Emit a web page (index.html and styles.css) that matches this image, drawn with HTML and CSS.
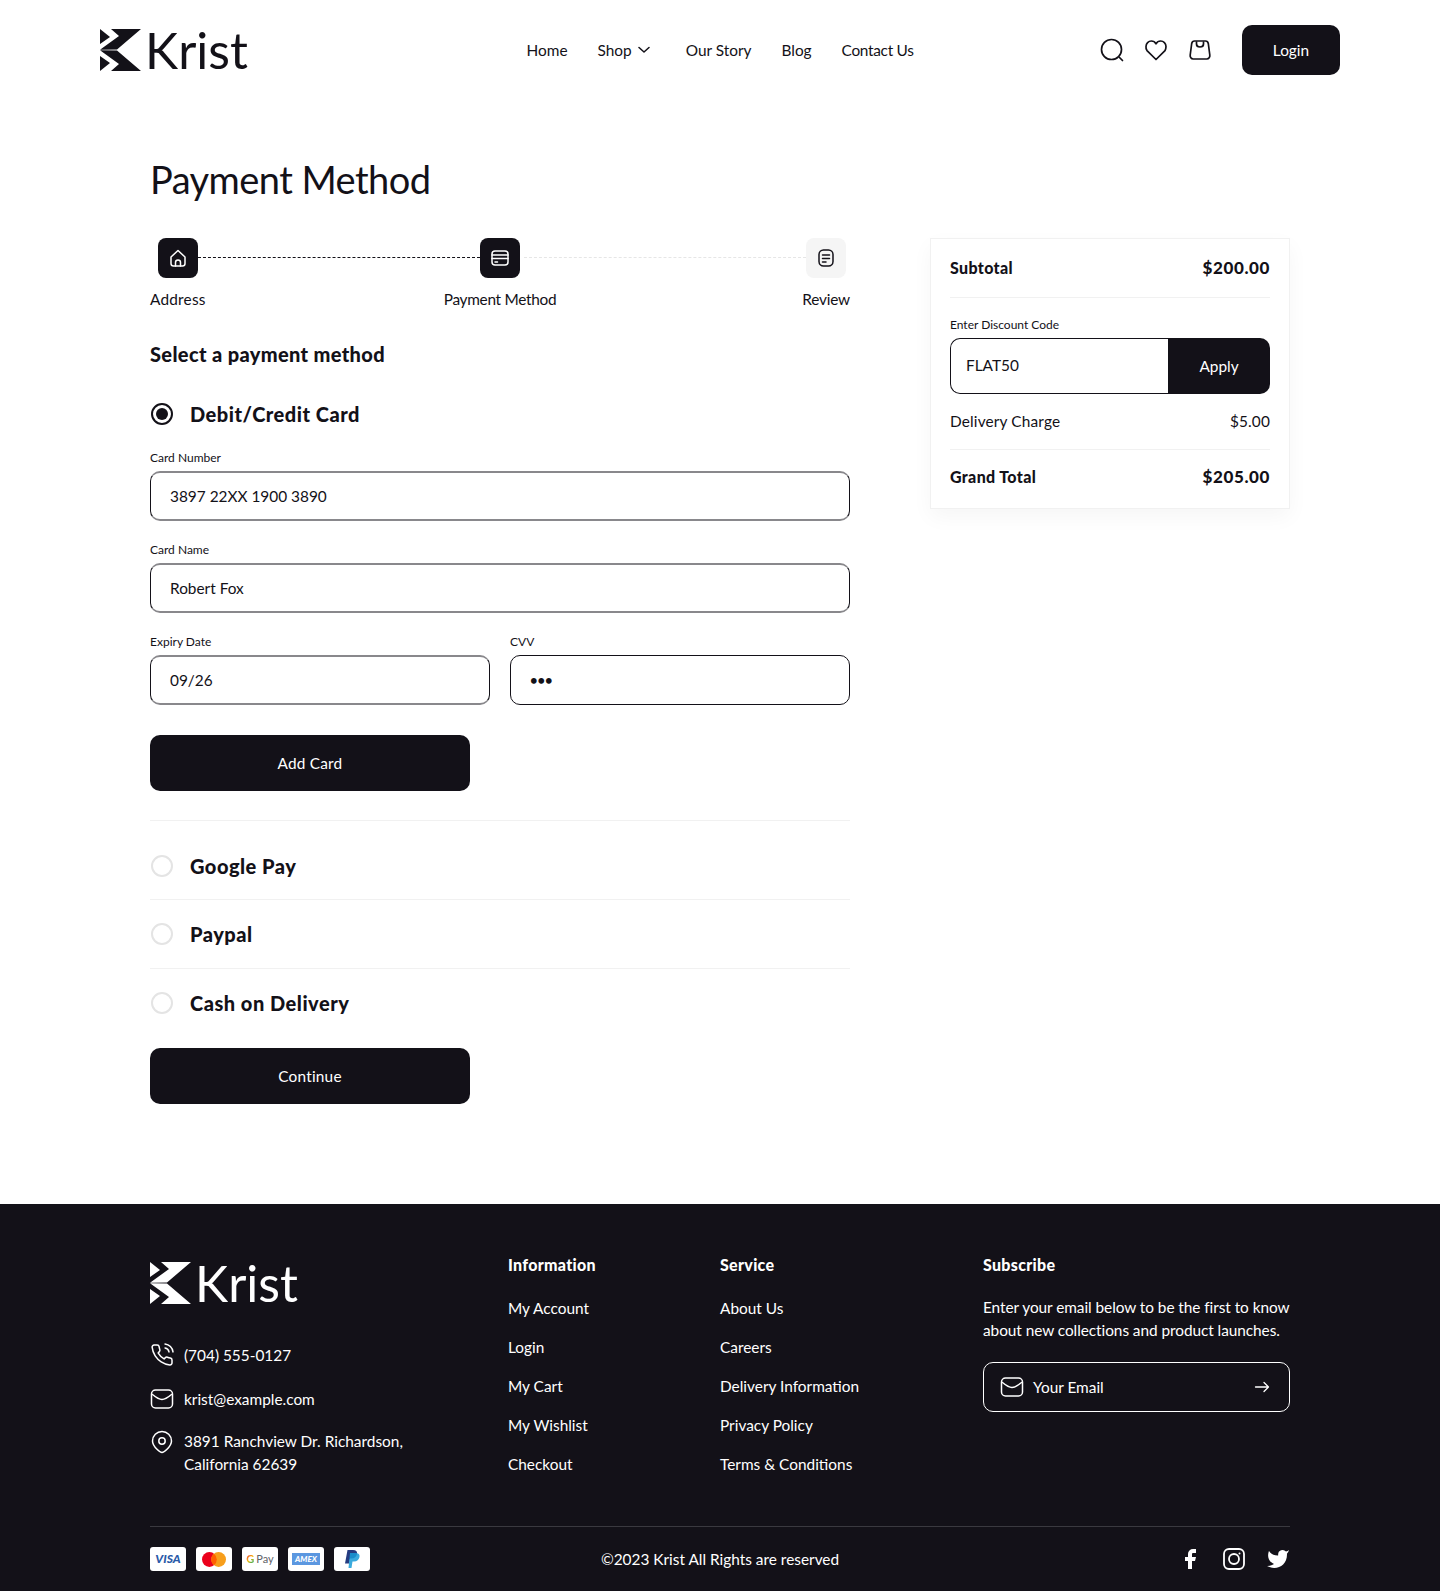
FILE: index.html
```html
<!DOCTYPE html>
<html lang="en">
<head>
<meta charset="utf-8">
<title>Krist - Payment Method</title>
<link rel="stylesheet" href="styles.css">
</head>
<body>
<header class="site-header">
  <a class="logo" href="#">
    <svg class="logo-mark" viewBox="0 0 41 42"><path d="M0 0 10 8 0 15zM0 27 10 34 0 42zM11 0H41L17 20.500 0 20.800 19 7zM0 21.200 17 21.500 41 42H11L19 35z"/></svg>
    <span class="logo-text">Krist</span>
  </a>
  <nav class="main-nav">
    <a>Home</a>
    <a class="has-caret">Shop <svg class="caret" viewBox="0 0 12 8"><path d="M1 1.500 6 6l5-4.500"/></svg></a>
    <a>Our Story</a>
    <a>Blog</a>
    <a class="nav-contact">Contact Us</a>
  </nav>
  <div class="header-actions">
    <svg class="ico" viewBox="0 0 24 24"><circle cx="11.500" cy="11.500" r="10"/><path d="m19.500 19.500 3 3"/></svg>
    <svg class="ico" viewBox="0 0 24 24"><path d="M12 21.500 3 12.600A6 6 0 0 1 2 8.500C2 5.300 4.500 3 7.300 3c2 0 3.700 1 4.700 2.800C13 4 14.700 3 16.700 3 19.500 3 22 5.300 22 8.500c0 1.500-.4 2.900-1 4.100z"/></svg>
    <svg class="ico" viewBox="0 0 24 24"><path d="M6.500 3h11c1.500 0 2.500 1 2.800 2.500l1.500 11.500c.3 2.200-1 4-3 4H5.200c-2 0-3.300-1.800-3-4L3.700 5.500C4 4 5 3 6.500 3z"/><path d="M8.500 4v2c0 1.800 1.500 3 3.500 3s3.500-1.200 3.500-3V4"/></svg>
    <button class="btn btn-login">Login</button>
  </div>
</header>

<main class="page">
  <h1 class="page-title">Payment Method</h1>
  <div class="columns">
    <section class="checkout">
      <div class="step-icons">
        <span class="step-box step-first step-on"><svg class="ico-sm" viewBox="0 0 20 20"><path d="M3 9 10 2.500 17 9v6.500c0 1.400-1 2.500-2.500 2.500h-9C4 18 3 16.900 3 15.500z"/><path d="M7.500 18v-3.500a2.500 2.500 0 0 1 5 0V18"/></svg></span>
        <span class="step-line step-line-done"></span>
        <span class="step-box step-on"><svg class="ico-sm" viewBox="0 0 20 20"><rect x="2" y="3" width="16" height="14" rx="3"/><path d="M2 7h16M2 10.500h16M5 14h2.500"/></svg></span>
        <span class="step-line step-line-next"></span>
        <span class="step-box step-last"><svg class="ico-sm" viewBox="0 0 20 20"><rect x="3" y="2" width="14" height="16" rx="4.500"/><path d="M6.500 7h7M6.500 10.500h7M6.500 14h3.500"/></svg></span>
      </div>
      <div class="step-labels">
        <span class="sl-start">Address</span>
        <span class="sl-mid">Payment Method</span>
        <span class="sl-end">Review</span>
      </div>

      <h2 class="section-title">Select a payment method</h2>

      <div class="pay-option pay-open">
        <span class="radio radio-on"></span>
        <span class="pay-name">Debit/Credit Card</span>
      </div>

      <div class="field-group">
        <label class="field-label">Card Number</label>
        <div class="field field-soft">3897 22XX 1900 3890</div>
      </div>
      <div class="field-group">
        <label class="field-label">Card Name</label>
        <div class="field field-soft">Robert Fox</div>
      </div>
      <div class="field-pair">
        <div>
          <label class="field-label">Expiry Date</label>
          <div class="field field-soft">09/26</div>
        </div>
        <div>
          <label class="field-label">CVV</label>
          <div class="field field-dots">•••</div>
        </div>
      </div>

      <button class="btn btn-wide btn-add">Add Card</button>

      <div class="pay-row pay-row-first">
        <span class="radio"></span><span class="pay-name">Google Pay</span>
      </div>
      <div class="pay-row">
        <span class="radio"></span><span class="pay-name">Paypal</span>
      </div>
      <div class="pay-row">
        <span class="radio"></span><span class="pay-name">Cash on Delivery</span>
      </div>

      <button class="btn btn-wide btn-continue">Continue</button>
    </section>

    <aside class="summary">
      <div class="sum-row sum-strong sum-top"><span>Subtotal</span><span class="sum-price">$200.00</span></div>
      <label class="field-label discount-label">Enter Discount Code</label>
      <div class="discount">
        <div class="discount-input">FLAT50</div>
        <button class="discount-btn">Apply</button>
      </div>
      <div class="sum-row sum-delivery"><span>Delivery Charge</span><span>$5.00</span></div>
      <div class="sum-row sum-strong sum-grand"><span>Grand Total</span><span class="sum-price">$205.00</span></div>
    </aside>
  </div>
</main>

<footer class="site-footer">
  <div class="footer-grid">
    <div class="footer-brand">
      <a class="logo logo-light" href="#">
        <svg class="logo-mark" viewBox="0 0 41 42"><path d="M0 0 10 8 0 15zM0 27 10 34 0 42zM11 0H41L17 20.500 0 20.800 19 7zM0 21.200 17 21.500 41 42H11L19 35z"/></svg>
        <span class="logo-text">Krist</span>
      </a>
      <div class="contact contact-first">
        <svg class="ico-foot" viewBox="0 0 24 24"><path d="M15.050 5A5 5 0 0 1 19 8.950M15.050 1A9 9 0 0 1 23 8.940m-1 7.980v3a2 2 0 0 1-2.180 2 19.790 19.790 0 0 1-8.630-3.070 19.500 19.500 0 0 1-6-6 19.790 19.790 0 0 1-3.070-8.670A2 2 0 0 1 4.110 2h3a2 2 0 0 1 2 1.720 12.840 12.840 0 0 0 .7 2.810 2 2 0 0 1-.45 2.110L8.090 9.910a16 16 0 0 0 6 6l1.270-1.270a2 2 0 0 1 2.110-.45 12.840 12.840 0 0 0 2.810.7A2 2 0 0 1 22 16.920z"/></svg>
        <span>(704) 555-0127</span>
      </div>
      <div class="contact">
        <svg class="ico-foot" viewBox="0 0 24 24"><rect x="1.500" y="3" width="21" height="18" rx="4"/><path d="M2.500 7.500c3 2.500 6.500 5 9.500 5s6.500-2.500 9.500-5"/></svg>
        <span>krist@example.com</span>
      </div>
      <div class="contact contact-addr">
        <svg class="ico-foot" viewBox="0 0 24 24"><path d="M12 22.500c-1.500 0-3-1.200-5-3.200C4.500 16.800 2.500 14 2.500 11a9.500 9.500 0 0 1 19 0c0 3-2 5.800-4.500 8.300-2 2-3.500 3.200-5 3.200z"/><circle cx="12" cy="11" r="3.200"/></svg>
        <span>3891 Ranchview Dr. Richardson,<br>California 62639</span>
      </div>
    </div>
    <div class="footer-col">
      <h3>Information</h3>
      <a>My Account</a><a>Login</a><a>My Cart</a><a>My Wishlist</a><a>Checkout</a>
    </div>
    <div class="footer-col">
      <h3>Service</h3>
      <a>About Us</a><a>Careers</a><a>Delivery Information</a><a>Privacy Policy</a><a>Terms &amp; Conditions</a>
    </div>
    <div class="footer-sub">
      <h3>Subscribe</h3>
      <p>Enter your email below to be the first to know<br>about new collections and product launches.</p>
      <div class="sub-box">
        <svg class="ico-foot" viewBox="0 0 24 24"><rect x="1.500" y="3" width="21" height="18" rx="4"/><path d="M2.500 7.500c3 2.500 6.500 5 9.500 5s6.500-2.500 9.500-5"/></svg>
        <span class="sub-text">Your Email</span>
        <svg class="sub-arrow" viewBox="0 0 16 12"><path d="M1.500 6h13M10 1.500 14.500 6 10 10.500"/></svg>
      </div>
    </div>
  </div>
  <div class="footer-bottom">
    <div class="cards">
      <span class="pay-card pc-visa">VISA</span>
      <span class="pay-card"><svg class="mc" viewBox="0 0 26 16"><circle cx="8" cy="8" r="8" fill="#eb001b"/><circle cx="18" cy="8" r="8" fill="#f79e1b"/><path d="M13 1.750a8 8 0 0 1 0 12.500 8 8 0 0 1 0-12.500z" fill="#ff5f00"/></svg></span>
      <span class="pay-card pc-gpay"><b class="g1">G</b><span>Pay</span></span>
      <span class="pay-card"><span class="pc-amex">AMEX</span></span>
      <span class="pay-card"><svg class="pp" viewBox="0 0 16 18"><path d="M3.500 0H9c3 0 4.500 1.500 4 4s-2.500 4.500-5.500 4.500H6L5 13.500H1z" fill="#253b80"/><path d="M6 3h5.500c3 0 4.500 1.500 4 4s-2.500 4.500-5.500 4.500H8.500L7.500 18h-3z" fill="#179bd7" opacity=".85"/></svg></span>
    </div>
    <div class="copyright">©2023 Krist All Rights are reserved</div>
    <div class="socials">
      <svg class="soc soc-fill" viewBox="0 0 24 24"><path d="M18 2h-3a5 5 0 0 0-5 5v3H7v4h3v8h4v-8h3l1-4h-4V7a1 1 0 0 1 1-1h3z"/></svg>
      <svg class="soc soc-line" viewBox="0 0 24 24"><rect x="2" y="2" width="20" height="20" rx="5"/><circle cx="12" cy="12" r="5"/><circle class="soc-dot" cx="17.500" cy="6.500" r="1"/></svg>
      <svg class="soc soc-fill" viewBox="0 0 24 24"><path d="M23 3a10.900 10.900 0 0 1-3 1.530 4.480 4.480 0 0 0-7.860 3v1A10.660 10.660 0 0 1 3 4s-4 9 5 13a11.640 11.640 0 0 1-7 2c9 5 20 0 20-11.500a4.500 4.500 0 0 0-.08-.83A7.720 7.720 0 0 0 23 3z"/></svg>
    </div>
  </div>
</footer>
</body>
</html>
```
FILE: styles.css
```css
* { box-sizing: border-box; }
html, body { margin: 0; padding: 0; }
body {
  font-family: "Lato", "Liberation Sans", sans-serif;
  font-size: 15.4px;
  line-height: 24px;
  color: #131118;
  background: #fff;
  width: 1440px;
}
h1, h2, h3, p { margin: 0; font-weight: inherit; }
button { font: inherit; border: 0; cursor: pointer; }

/* header */
.site-header {
  height: 100px;
  padding: 0 100px;
  display: grid;
  grid-template-columns: 1fr auto 1fr;
  align-items: center;
}
.logo { display: flex; align-items: center; color: #131118; text-decoration: none; height: 42px; width: max-content; }
.logo-mark { width: 41px; height: 42px; fill: currentColor; flex: none; }
.logo-text { font-size: 50px; line-height: 42px; margin-left: 4px; font-weight: 400; }
.main-nav { display: flex; align-items: center; gap: 30px; }
.main-nav a { display: flex; align-items: center; }
.has-caret { gap: 6px; margin-right: 6px; }
.nav-contact { letter-spacing: -.3px; }
.caret { width: 12px; height: 8px; fill: none; stroke: #131118; stroke-width: 1.5; stroke-linecap: round; stroke-linejoin: round; }
.header-actions { display: flex; align-items: center; justify-content: flex-end; gap: 20px; }
.ico { width: 24px; height: 24px; fill: none; stroke: #131118; stroke-width: 1.7; stroke-linecap: round; stroke-linejoin: round; }
.btn { background: #131118; color: #fff; border-radius: 10px; display: block; }
.btn-login { width: 98px; height: 50px; margin-left: 10px; }
.btn-wide { width: 320px; height: 56px; letter-spacing: .2px; }

/* main */
.page { width: 1140px; margin: 0 auto; padding: 55px 0 100px; }
.page-title { font-size: 38px; line-height: 48px; font-weight: 400; letter-spacing: -.55px; margin-bottom: 35px; }
.columns { display: flex; gap: 80px; align-items: flex-start; }
.checkout { width: 700px; flex: none; }

.step-icons { display: flex; align-items: center; padding: 0 4px 0 8px; }
.step-box { width: 40px; height: 40px; border-radius: 8px; background: #f5f5f5; display: flex; align-items: center; justify-content: center; flex: none; color: #131118; }
.step-on { background: #131118; color: #fff; }
.ico-sm { width: 20px; height: 20px; fill: none; stroke: currentColor; stroke-width: 1.5; stroke-linecap: round; stroke-linejoin: round; }
.step-line { flex: 1; border-top: 1px dashed #131118; margin-bottom: 1px; }
.step-line-next { border-top-color: #e6e6e6; margin-left: 4px; }
.step-labels { display: grid; grid-template-columns: 1fr auto 1fr; margin-top: 9px; line-height: 24px; }
.sl-start { justify-self: start; letter-spacing: .2px; }
.sl-mid { letter-spacing: -.3px; }
.sl-end { justify-self: end; letter-spacing: -.2px; }

.section-title { font-size: 20px; line-height: 28px; font-weight: 900; letter-spacing: .35px; margin-top: 29px; }
.pay-option, .pay-row { display: flex; align-items: center; gap: 17px; }
.pay-open { margin-top: 31px; height: 30px; }
.pay-name { font-size: 20px; line-height: 30px; font-weight: 900; letter-spacing: .5px; }
.radio { width: 22px; height: 22px; margin-left: 1px; border-radius: 50%; border: 2px solid #e4e4e4; flex: none; }
.radio-on { border-color: #131118; display: flex; align-items: center; justify-content: center; }
.radio-on::after { content: ""; width: 12px; height: 12px; border-radius: 50%; background: #131118; }

.field-group { margin-top: 21px; }
.field-pair { margin-top: 21px; display: grid; grid-template-columns: 340px 340px; gap: 20px; }
.field-label { display: block; font-size: 12px; line-height: 16px; }
.field {
  margin-top: 5px;
  height: 50px;
  border: 1px solid #131118;
  border-radius: 10px;
  padding: 0 19px 1px;
  display: flex;
  align-items: center;
}
.field-soft { border-top: 2px solid #89888c; border-bottom: 2px solid #89888c; }
.field-dots { font-size: 13px; font-weight: 700; }
.btn-add { margin-top: 30px; }

.pay-row { height: 69px; border-top: 1px solid #f1f1f1; }
.pay-row-first { margin-top: 29px; height: 79px; padding-top: 11px; }
.btn-continue { margin-top: 11px; }

/* summary */
.summary {
  width: 360px;
  height: 271px;
  flex: none;
  border: 1px solid #f1f1f1;
  box-shadow: 0 8px 20px rgba(19, 17, 24, .04);
  padding: 0 19px;
}
.sum-row { display: flex; justify-content: space-between; align-items: center; }
.sum-strong { font-weight: 900; font-size: 16px; letter-spacing: .35px; }
.sum-price { font-size: 17px; font-weight: 900; letter-spacing: .6px; }
.sum-top { height: 59px; border-bottom: 1px solid #f1f1f1; }
.discount-label { margin-top: 19px; }
.discount { display: flex; margin-top: 5px; height: 56px; }
.discount-input {
  flex: 1;
  border: 1px solid #131118;
  border-right: 0;
  border-radius: 10px 0 0 10px;
  padding: 0 15px 2px;
  display: flex;
  align-items: center;
}
.discount-btn { width: 102px; background: #131118; color: #fff; border-radius: 0 10px 10px 0; }
.sum-delivery { height: 56px; padding-bottom: 2px; border-bottom: 1px solid #f1f1f1; letter-spacing: .15px; }
.sum-grand { height: 56px; padding-bottom: 2px; }

/* footer */
.site-footer { background: #131118; color: #fff; height: 387px; padding-top: 51px; }
.footer-grid {
  width: 1140px;
  margin: 0 auto;
  display: grid;
  grid-template-columns: 358px 212px 263px 307px;
  height: 271px;
}
.logo-light { color: #fff; margin-top: 7px; }
.contact { display: flex; align-items: flex-start; gap: 10px; margin-top: 20px; line-height: 24px; }
.contact-first { margin-top: 39px; }
.contact-addr { line-height: 23px; margin-top: 19px; }
.ico-foot { width: 24px; height: 24px; fill: none; stroke: #fff; stroke-width: 1.5; stroke-linecap: round; stroke-linejoin: round; flex: none; }
.footer-col, .footer-sub { display: flex; flex-direction: column; }
.footer-col h3, .footer-sub h3 { font-size: 16px; line-height: 20px; font-weight: 900; letter-spacing: .3px; margin-bottom: 21px; }
.footer-col a { line-height: 24px; margin-bottom: 15px; }
.footer-sub p { line-height: 23px; white-space: nowrap; letter-spacing: -.06px; }
.sub-box {
  margin-top: 20px;
  height: 50px;
  border: 1px solid #fff;
  border-radius: 10px;
  display: flex;
  align-items: center;
  padding: 0 19px 0 16px;
  gap: 9px;
}
.sub-text { flex: 1; }
.sub-arrow { width: 16px; height: 12px; fill: none; stroke: #fff; stroke-width: 1.3; stroke-linecap: round; stroke-linejoin: round; }
.footer-bottom {
  width: 1140px;
  margin: 0 auto;
  border-top: 1px solid #3a393f;
  height: 65px;
  display: grid;
  grid-template-columns: 1fr auto 1fr;
  align-items: center;
}
.cards { display: flex; gap: 10px; }
.pay-card {
  width: 36px;
  height: 24px;
  background: #fff;
  border-radius: 3px;
  display: flex;
  align-items: center;
  justify-content: center;
  overflow: hidden;
}
.pc-visa { color: #2a5aa8; font-size: 12px; line-height: 24px; font-weight: 900; font-style: italic; }
.mc { width: 24px; height: 15px; }
.pc-gpay { gap: 2px; color: #5f6368; font-size: 11px; line-height: 24px; }
.g1 { background: linear-gradient(135deg, #ea4335 30%, #fbbc05 50%, #34a853 70%, #4285f4 85%); -webkit-background-clip: text; background-clip: text; color: transparent; }
.pc-amex { background: #5b97e0; color: #fff; width: 28px; height: 12px; font-size: 8px; line-height: 12px; font-weight: 900; font-style: italic; text-align: center; display: block; }
.pp { width: 16px; height: 18px; }
.copyright { text-align: center; }
.socials { display: flex; justify-content: flex-end; gap: 20px; }
.soc { width: 24px; height: 24px; }
.soc-fill { fill: #fff; }
.soc-line { fill: none; stroke: #fff; stroke-width: 1.8; }
.soc-dot { fill: #fff; stroke: none; }
```
